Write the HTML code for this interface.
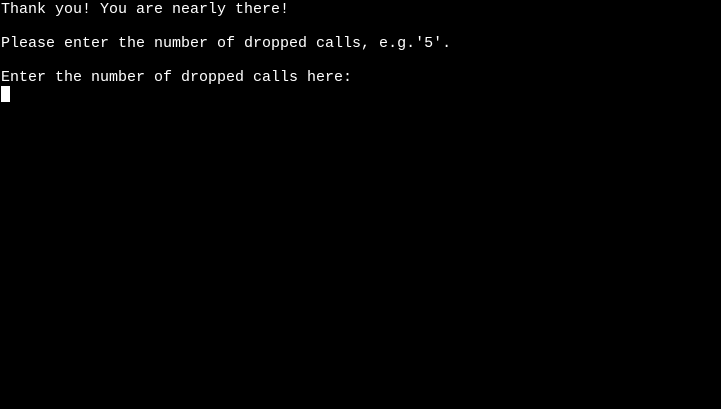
<!DOCTYPE html>
<html><head><style>
html,body{margin:0;padding:0;background:#000;width:721px;height:409px;overflow:hidden}
pre{margin:0;padding:1px 0 0 1px;font-family:"Liberation Mono",monospace;font-size:15px;line-height:17px;color:#fff}
.cur{display:inline-block;width:9px;height:16px;background:#fff;vertical-align:top}
</style></head><body>
<pre>Thank you! You are nearly there!

Please enter the number of dropped calls, e.g.'5'.

Enter the number of dropped calls here:
<span class="cur"></span></pre>
</body></html>
